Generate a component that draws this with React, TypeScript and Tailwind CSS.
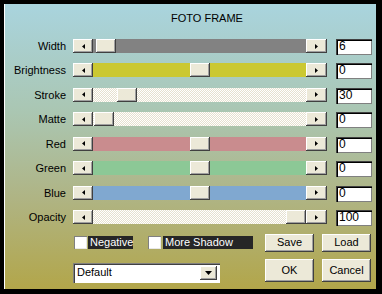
const bevel =
  'bg-[#ece9d8] shadow-[inset_-1px_-1px_#404040,inset_1px_1px_#ffffff,inset_-2px_-2px_#a0a0a0]';

const dither =
  'bg-[repeating-conic-gradient(#ffffff_0_25%,#e6e1cf_0_50%)] bg-[length:2px_2px]';

type Row = { label: string; track: string; thumb: number; value: string };

const rows: Row[] = [
  { label: 'Width', track: 'bg-[#828282]', thumb: 3, value: '6' },
  { label: 'Brightness', track: 'bg-[#cbc832]', thumb: 97, value: '0' },
  { label: 'Stroke', track: dither, thumb: 24, value: '30' },
  { label: 'Matte', track: dither, thumb: 1, value: '0' },
  { label: 'Red', track: 'bg-[#c98c8e]', thumb: 97, value: '0' },
  { label: 'Green', track: 'bg-[#8cc896]', thumb: 97, value: '0' },
  { label: 'Blue', track: 'bg-[#80a8d0]', thumb: 97, value: '0' },
  { label: 'Opacity', track: dither, thumb: 193, value: '100' },
];

function Arrow({ dir }: { dir: 'left' | 'right' | 'down' }) {
  const pts =
    dir === 'left' ? '3,0 3,5 0,2.5' : dir === 'right' ? '0,0 0,5 3,2.5' : '0,0 7,0 3.5,4';
  const w = dir === 'down' ? 7 : 3;
  const h = dir === 'down' ? 4 : 5;
  return (
    <svg width={w} height={h} viewBox={`0 0 ${w} ${h}`}>
      <polygon points={pts} fill="#000" />
    </svg>
  );
}

function Slider({ track, thumb }: { track: string; thumb: number }) {
  return (
    <div className="flex h-[14px] w-[254px]">
      <div className={`${bevel} flex w-[20px] items-center justify-center`}>
        <Arrow dir="left" />
      </div>
      <div className={`${track} flex flex-1`}>
        <div className={`${bevel} w-[20px]`} style={{ marginLeft: thumb }} />
      </div>
      <div className={`${bevel} flex w-[21px] items-center justify-center`}>
        <Arrow dir="right" />
      </div>
    </div>
  );
}

function Check({ label, width, gap }: { label: string; width: number; gap: number }) {
  return (
    <div className="flex items-center">
      <div className="h-[13px] w-[13px] bg-white shadow-[inset_1px_1px_#808080,inset_-1px_-1px_#e8e8e8]" />
      <div
        className="h-[13px] bg-[#262626] pl-[2px] text-[11px] leading-[13px] text-white"
        style={{ width, marginLeft: gap }}
      >
        {label}
      </div>
    </div>
  );
}

export default function App() {
  return (
    <div className="h-[294px] w-[382px] bg-black pb-[5px] pl-[4px] pr-[6px] pt-[4px] font-['Liberation_Sans',Arial,sans-serif] text-black">
      <div className="flex h-full flex-col border-l border-white bg-[linear-gradient(180deg,#a9d4de_0%,#aac6b2_38%,#afb484_68%,#b2a64a_100%)]">
        <div className="mt-[7px] h-[14px] pl-[166px] text-[11px] leading-[14px]">FOTO FRAME</div>

        <div className="mt-[9px] flex flex-col">
          {rows.map((r) => (
            <div key={r.label} className="flex h-[24.45px] items-start pt-[5px]">
              <div className="w-[61px] text-right text-[11px] leading-[14px]">{r.label}</div>
              <div className="ml-[7px]">
                <Slider track={r.track} thumb={r.thumb} />
              </div>
              <div className="ml-[9px] h-[16px] w-[36px] bg-white pl-[3px] text-[12px] leading-[15px] shadow-[inset_1px_1px_#404040,inset_2px_2px_#000,inset_-1px_-1px_#808080]">
                {r.value}
              </div>
            </div>
          ))}
        </div>

        <div className="mt-[4px] flex h-[18px] items-center">
          <div className="ml-[69px]">
            <Check label="Negative" width={45} gap={1} />
          </div>
          <div className="ml-[15px]">
            <Check label="More Shadow" width={90} gap={2} />
          </div>
          <div className={`${bevel} ml-[12px] flex h-[18px] w-[49px] items-center justify-center text-[11px]`}>
            Save
          </div>
          <div className={`${bevel} ml-[8px] flex h-[18px] w-[49px] items-center justify-center text-[11px]`}>
            Load
          </div>
        </div>

        <div className="mt-[7px] flex items-start">
          <div className="ml-[68px] mt-[4px] flex h-[20px] w-[147px] items-center bg-white pl-[4px] pr-[3px] shadow-[inset_1px_1px_#808080,inset_2px_2px_#404040,inset_-1px_-1px_#ffffff]">
            <span className="flex-1 text-[11px]">Default</span>
            <div className={`${bevel} flex h-[14px] w-[17px] items-center justify-center`}>
              <Arrow dir="down" />
            </div>
          </div>
          <div className={`${bevel} ml-[45px] flex h-[23px] w-[49px] items-center justify-center text-[11px]`}>
            OK
          </div>
          <div className={`${bevel} ml-[8px] flex h-[23px] w-[49px] items-center justify-center text-[11px]`}>
            Cancel
          </div>
        </div>
      </div>
    </div>
  );
}
